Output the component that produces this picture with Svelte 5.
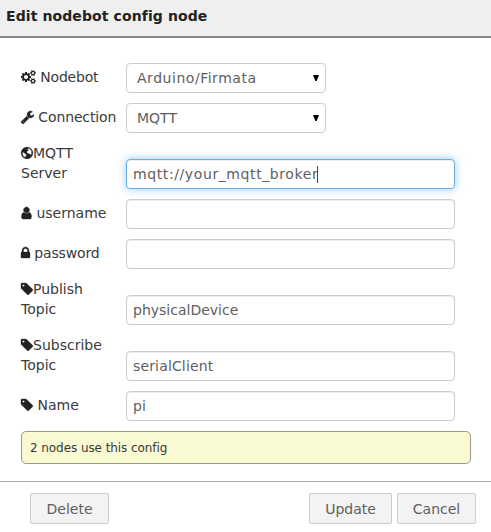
<script>
  const tag = {
    box: '128 0 1536 1792',
    w: 12,
    stroke: 50,
    d: 'M576 448q0-53-37.5-90.5t-90.5-37.5-90.5 37.5-37.5 90.5 37.5 90.5 90.5 37.5 90.5-37.5 37.5-90.5zm1067 576q0 53-37 90l-491 492q-39 37-91 37-53 0-90-37l-715-716q-38-37-64.5-101t-26.5-117v-416q0-52 38-90t90-38h416q53 0 117 26.5t102 64.5l715 714q37 39 37 91z'
  };
  const smallGear = 'v140q0 16-149 31-12 27-30 52 51 113 51 138 0 4-4 7-122 71-124 71-8 0-46-47t-52-68q-20 2-30 2t-30-2q-14 21-52 68t-46 47q-2 0-124-71-4-3-4-7 0-25 51-138-18-25-30-52-149-15-149-31v-140q0-16 149-31 13-29 30-52-51-113-51-138 0-4 4-7 4-2 35-20t59-34 30-16q8 0 46 46.5t52 67.5q20-2 30-2t30 2q51-71 92-112l6-2q4 0 124 70 4 3 4 7 0 25-51 138 17 23 30 52 149 15 149 31z';
  const cogs = {
    box: '0 0 1920 1792',
    w: 15,
    stroke: 0,
    d: 'M896 896q0-106-75-181t-181-75-181 75-75 181 75 181 181 75 181-75 75-181zm768 512q0-52-38-90t-90-38-90 38-38 90q0 53 37.5 90.5t90.5 37.5 90.5-37.5 37.5-90.5zm0-1024q0-52-38-90t-90-38-90 38-38 90q0 53 37.5 90.5t90.5 37.5 90.5-37.5 37.5-90.5zm-384 421v185q0 10-7 19.5t-16 10.5l-155 24q-11 35-32 76 34 48 90 115 7 11 7 20 0 12-7 19-23 30-82.5 89.5t-78.5 59.5q-11 0-21-7l-115-90q-37 19-77 31-11 108-23 155-7 24-30 24h-186q-11 0-20-7.5t-10-17.5l-23-153q-34-10-75-31l-118 89q-7 7-20 7-11 0-21-8-144-133-144-160 0-9 7-19 10-14 41-53t47-61q-23-44-35-82l-152-24q-10-1-17-9.5t-7-19.5v-185q0-10 7-19.5t16-10.5l155-24q11-35 32-76-34-48-90-115-7-11-7-20 0-12 7-20 22-30 82-89t79-59q11 0 21 7l115 90q34-18 77-32 11-108 23-154 7-24 30-24h186q11 0 20 7.5t10 17.5l23 153q34 10 75 31l118-89q8-7 20-7 11 0 21 8 144 133 144 160 0 8-7 19-12 16-42 54t-45 60q23 48 34 82l152 23q10 2 17 10.5t7 19.5zM1920 1338' + smallGear + 'M1920 314' + smallGear
  };
  const wrench = {
    box: '64 0 1664 1792',
    w: 13,
    stroke: 40,
    d: 'M448 1472q0-26-19-45t-45-19-45 19-19 45 19 45 45 19 45-19 19-45zm644-420l-682 682q-37 37-90 37-52 0-91-37l-106-108q-38-36-38-90 0-53 38-91l681-681q39 98 114.5 173.5t173.5 114.5zm634-435q0 39-23 106-47 134-164.5 217.5t-258.5 83.5q-185 0-316.5-131.5t-131.5-316.5 131.5-316.5 316.5-131.5q58 0 121.5 16.5t107.5 46.5q16 11 16 28t-16 28l-293 169v224l193 107q5-3 79-48.5t135.5-81 70.5-35.5q15 0 23.5 10t8.5 25z'
  };
  const globe = {
    box: '128 0 1536 1792',
    w: 12,
    stroke: 30,
    d: 'M896 128a768 768 0 1 0 0 1536a768 768 0 1 0 0-1536zM1040 290L1230 340L1400 500L1500 700L1440 790L1500 880L1460 1040L1300 1120L1180 960L1010 960L900 850L900 680L1040 590L1140 490L1020 500L960 410zM360 760L450 820L590 930L760 1040L830 1140L780 1260L700 1330L680 1460L520 1370L380 1210L300 1000z'
  };
  const user = {
    box: '192 0 1408 1792',
    w: 11,
    stroke: 50,
    d: 'M1536 1399q0 109-62.5 187t-150.5 78h-854q-88 0-150.5-78t-62.5-187q0-85 8.5-160.5t31.5-152 58.5-131 94-89 134.5-34.5q131 128 313 128t313-128q76 0 134.5 34.5t94 89 58.5 131 31.5 152 8.5 160.5zm-256-887q0 159-112.5 271.5t-271.5 112.5-271.5-112.5-112.5-271.5 112.5-271.5 271.5-112.5 271.5 112.5 112.5 271.5z'
  };
  const lock = {
    box: '320 0 1152 1792',
    w: 9,
    stroke: 40,
    d: 'M640 768h512v-192q0-106-75-181t-181-75-181 75-75 181v192zm832 96v576q0 40-28 68t-68 28h-960q-40 0-68-28t-28-68v-576q0-40 28-68t68-28h32v-192q0-184 132-316t316-132 316 132 132 316v192h32q40 0 68 28t28 68z'
  };

  const rows = [
    { icon: cogs, label: ' Nodebot', value: 'Arduino/Firmata', kind: 'select', track: 0.53, labelTrack: -0.2 },
    { icon: wrench, label: ' Connection', value: 'MQTT', kind: 'select', labelTrack: -0.13 },
    { icon: globe, label: 'MQTT\nServer', value: 'mqtt://your_mqtt_broker', kind: 'focus', track: 0.6 },
    { icon: user, label: ' username', value: '' },
    { icon: lock, label: ' password', value: '', labelTrack: -0.15 },
    { icon: tag, label: 'Publish\nTopic', value: 'physicalDevice' },
    { icon: tag, label: 'Subscribe\nTopic', value: 'serialClient', track: 0.15 },
    { icon: tag, label: ' Name', value: 'pi' }
  ];
</script>

<div class="dialog">
  <header>Edit nodebot config node</header>
  <div class="form">
    {#each rows as row}
      <div class="row">
        <div class="label" style:letter-spacing="{row.labelTrack ?? 0}px"><svg width={row.icon.w} height="14" viewBox={row.icon.box}><path fill-rule="evenodd" stroke-width={row.icon.stroke} d={row.icon.d} /></svg>{row.label}</div>
        <div class="field {row.kind ?? ''}">
          <span style:letter-spacing="{row.track ?? 0}px">{row.value}</span>
          {#if row.kind === 'focus'}<i class="caret"></i>{/if}
          {#if row.kind === 'select'}
            <svg class="arrow" width="6" height="6" viewBox="0 0 6 6"><path d="M0 0H6L3.6 6H2.4Z" /></svg>
          {/if}
        </div>
      </div>
    {/each}
    <div class="tip">2 nodes use this config</div>
  </div>
  <footer>
    <button class="delete">Delete</button>
    <button class="update">Update</button>
    <button class="cancel">Cancel</button>
  </footer>
</div>

<style>
  :global(body) { background: #fff; }
  .dialog {
    width: 491px;
    height: 532px;
    overflow: hidden;
    display: flex;
    flex-direction: column;
    box-sizing: border-box;
    font: 14px/20px "DejaVu Sans", sans-serif;
    color: #3a3a3a;
  }
  header {
    box-sizing: border-box;
    height: 38px;
    padding: 6px 6px 0;
    background: #efefef;
    border-bottom: 2px solid #888;
    font-size: 14px;
    letter-spacing: 0.1px;
    font-weight: bold;
    color: #222;
  }
  .form {
    height: 443px;
    box-sizing: border-box;
    padding: 25px 20px 0 21px;
  }
  .row {
    display: flex;
    align-items: flex-end;
    margin-bottom: 10px;
  }
  .label {
    width: 105px;
    padding-bottom: 6px;
    white-space: pre;
  }
  .label svg {
    vertical-align: -2px;
    fill: #222;
    stroke: #222;
    overflow: visible;
  }
  .field {
    box-sizing: border-box;
    width: 329px;
    height: 30px;
    padding: 0 6px;
    display: flex;
    align-items: center;
    border: 1px solid #ccc;
    border-radius: 4px;
    background: #fff;
    color: #606060;
    box-shadow: inset 0 1px 1px rgba(0, 0, 0, 0.075);
  }
  .select {
    width: 200px;
    padding: 0 6px 0 10px;
    justify-content: space-between;
    box-shadow: none;
  }
  .focus {
    border-color: #70ade0;
    box-shadow: inset 0 1px 1px rgba(0, 0, 0, 0.075), 0 0 8px rgba(82, 168, 236, 0.6);
  }
  .caret {
    width: 1px;
    height: 17px;
    margin-left: -1px;
    background: #444;
  }
  .tip {
    box-sizing: border-box;
    height: 33px;
    padding: 6px 8px;
    border: 1px solid #999b88;
    border-radius: 5px;
    background: #f9f9d2;
    font-size: 12px;
    letter-spacing: -0.07px;
  }
  footer {
    display: flex;
    align-items: flex-start;
    height: 51px;
    box-sizing: border-box;
    padding: 11px 15px 0 30px;
    border-top: 1px solid #aaa;
  }
  button {
    box-sizing: border-box;
    width: 79px;
    height: 31px;
    padding: 0;
    border: 1px solid #ccc;
    border-radius: 2px;
    background: #f3f3f3;
    font: inherit;
    color: #606060;
  }
  .update {
    width: 83px;
    margin-left: auto;
    margin-right: 5px;
  }
</style>
